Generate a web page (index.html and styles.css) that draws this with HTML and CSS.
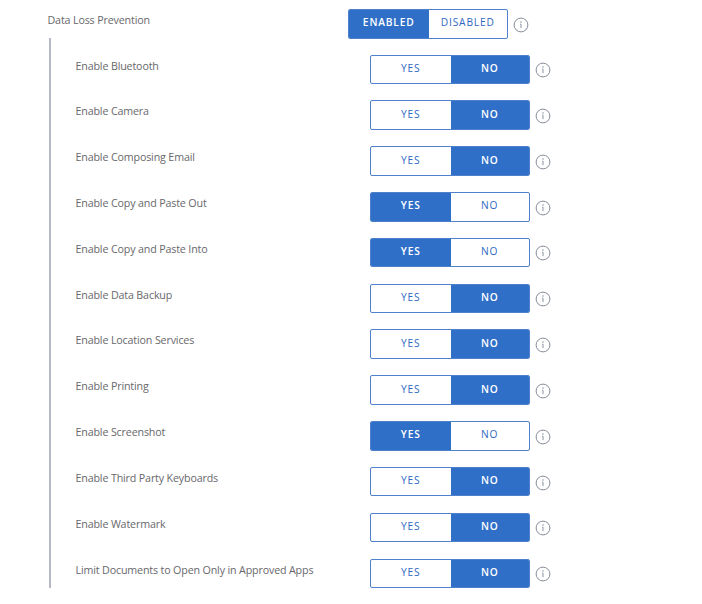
FILE: index.html
```
<!DOCTYPE html>
<html lang="en">
<head>
<meta charset="utf-8">
<title>Data Loss Prevention</title>
<link rel="stylesheet" href="styles.css">
</head>
<body>
<svg class="defs" width="0" height="0">
  <symbol id="info" viewBox="0 0 16 16">
    <circle cx="8" cy="8" r="6.9" fill="none" stroke="currentColor"/>
    <circle cx="8" cy="5" r=".75" fill="currentColor"/>
    <path d="M7.2 7.1H8v4" fill="none" stroke="currentColor" stroke-width=".95"/>
  </symbol>
</svg>
<main class="settings">
  <div class="row head"><span class="label">Data Loss Prevention</span><div class="toggle"><span class="option on">ENABLED</span><span class="option">DISABLED</span></div><svg class="info"><use href="#info"/></svg></div>
  <div class="group">
    <div class="row"><span class="label">Enable Bluetooth</span><div class="toggle"><span class="option">YES</span><span class="option on">NO</span></div><svg class="info"><use href="#info"/></svg></div>
    <div class="row"><span class="label">Enable Camera</span><div class="toggle"><span class="option">YES</span><span class="option on">NO</span></div><svg class="info"><use href="#info"/></svg></div>
    <div class="row"><span class="label">Enable Composing Email</span><div class="toggle"><span class="option">YES</span><span class="option on">NO</span></div><svg class="info"><use href="#info"/></svg></div>
    <div class="row"><span class="label">Enable Copy and Paste Out</span><div class="toggle"><span class="option on">YES</span><span class="option">NO</span></div><svg class="info"><use href="#info"/></svg></div>
    <div class="row"><span class="label">Enable Copy and Paste Into</span><div class="toggle"><span class="option on">YES</span><span class="option">NO</span></div><svg class="info"><use href="#info"/></svg></div>
    <div class="row"><span class="label">Enable Data Backup</span><div class="toggle"><span class="option">YES</span><span class="option on">NO</span></div><svg class="info"><use href="#info"/></svg></div>
    <div class="row"><span class="label">Enable Location Services</span><div class="toggle"><span class="option">YES</span><span class="option on">NO</span></div><svg class="info"><use href="#info"/></svg></div>
    <div class="row"><span class="label">Enable Printing</span><div class="toggle"><span class="option">YES</span><span class="option on">NO</span></div><svg class="info"><use href="#info"/></svg></div>
    <div class="row"><span class="label">Enable Screenshot</span><div class="toggle"><span class="option on">YES</span><span class="option">NO</span></div><svg class="info"><use href="#info"/></svg></div>
    <div class="row"><span class="label">Enable Third Party Keyboards</span><div class="toggle"><span class="option">YES</span><span class="option on">NO</span></div><svg class="info"><use href="#info"/></svg></div>
    <div class="row"><span class="label">Enable Watermark</span><div class="toggle"><span class="option">YES</span><span class="option on">NO</span></div><svg class="info"><use href="#info"/></svg></div>
    <div class="row"><span class="label">Limit Documents to Open Only in Approved Apps</span><div class="toggle"><span class="option">YES</span><span class="option on">NO</span></div><svg class="info"><use href="#info"/></svg></div>
  </div>
</main>
</body>
</html>
```
FILE: styles.css
```
* { box-sizing: border-box; }
body { margin: 0; background: #fff; font-family: "Open Sans", "Noto Sans", sans-serif; }
.defs { display: block; }
.settings { padding-top: 9px; }
.row { display: flex; align-items: flex-start; height: 29.5px; }
.label { width: 294.5px; margin-top: 3px; font-size: 10.7px; font-weight: 400; letter-spacing: -.15px; line-height: 16px; color: #68686b; white-space: nowrap; }
.head { height: 29px; padding-left: 47.5px; }
.head .label { width: 300.5px; }
.group { margin-left: 49px; height: 550px; border-left: 2px solid #b5bac6; padding: 16.6px 0 0 24.5px; display: flex; flex-direction: column; gap: 16.32px; }
.toggle { display: flex; width: 160px; height: 29.5px; border: 1px solid #4f80cb; border-radius: 2px; background: #fff; overflow: hidden; }
.option { flex: 0 0 78.5px; padding-top: 4.4px; font-size: 10.2px; line-height: 16px; letter-spacing: .85px; text-align: center; color: #2f69c2; font-weight: 500; }
.option:first-child { flex-basis: 79.5px; }
.option.on { background: #306fc7; color: #fff; font-weight: 600; }
.info { width: 16px; height: 16px; margin: 7.6px 0 0 5px; color: #858c99; }
```
